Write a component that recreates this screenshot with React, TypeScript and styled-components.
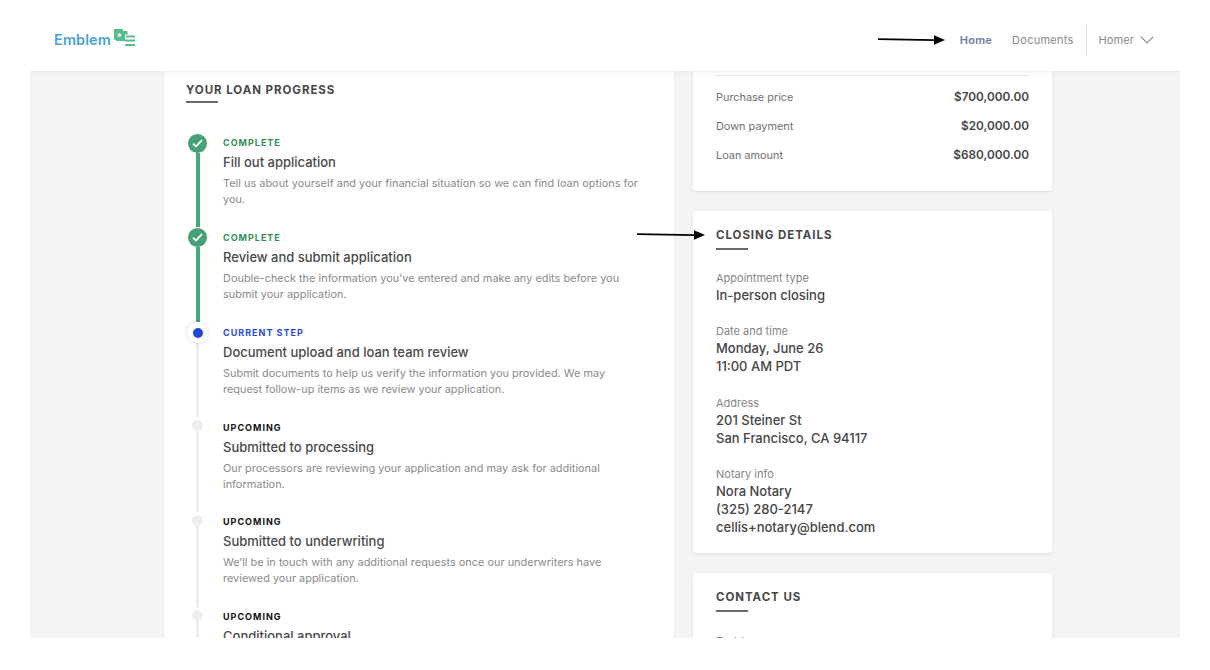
import React from "react";
import styled, { createGlobalStyle } from "styled-components";

const Global = createGlobalStyle`
  html, body { margin: 0; padding: 0; background: #fff; }
  body { font-family: Inter, "Liberation Sans", sans-serif; -webkit-font-smoothing: antialiased; }
  * { box-sizing: border-box; }
`;

const Frame = styled.div`
  position: relative;
  width: 1150px;
  height: 638px;
  margin-left: 30px;
  display: flex;
  flex-direction: column;
  overflow: hidden;
  background: #f4f4f4;
`;
const Header = styled.header`
  position: relative;
  z-index: 2;
  flex: none;
  height: 71px;
  padding: 8px 26px 0 24px;
  display: flex;
  align-items: center;
  justify-content: space-between;
  background: #fff;
  box-shadow: 0 1px 3px rgba(0, 0, 0, 0.06);
`;
const Brand = styled.div`
  display: flex;
  align-items: center;
  gap: 3px;
  margin-top: -4px;
`;
const BrandName = styled.span`
  font-size: 14.5px;
  font-weight: 600;
  letter-spacing: 0.1px;
  color: #4a9fd9;
  margin-top: 4px;
`;
const Nav = styled.nav`
  display: flex;
  align-items: center;
  height: 32px;
`;
const NavLink = styled.a<{ $active?: boolean }>`
  font-size: 11px;
  font-weight: ${(p) => (p.$active ? 600 : 400)};
  letter-spacing: 0.25px;
  color: ${(p) => (p.$active ? "#6f7aa6" : "#8a8a8a")};
  margin-right: 20px;
`;
const UserMenu = styled.div`
  height: 32px;
  margin-left: -8px;
  padding-left: 12px;
  display: flex;
  align-items: center;
  gap: 6px;
  border-left: 1px solid #e6e6e6;
  font-size: 11px;
  letter-spacing: 0.1px;
  color: #8a8a8a;
`;
const Body = styled.main`
  flex: 1;
  min-height: 0;
  padding-left: 134px;
  display: flex;
  align-items: flex-start;
  gap: 19px;
  overflow: hidden;
`;
const ProgressCard = styled.section`
  flex: none;
  width: 510px;
  height: 900px;
  padding: 12px 22px 0;
  background: #fff;
  box-shadow: 0 0 2px rgba(0, 0, 0, 0.1);
`;
const SectionTitle = styled.h2<{ $rule?: number }>`
  margin: 0;
  font-size: 11.5px;
  line-height: 14px;
  font-weight: 700;
  letter-spacing: 0.95px;
  text-transform: uppercase;
  color: #474747;
  &::after {
    content: "";
    display: block;
    width: 32px;
    height: 1.5px;
    margin-top: ${(p) => p.$rule ?? 6}px;
    background: #6a6a6a;
  }
`;
const Steps = styled.ol`
  list-style: none;
  margin: 30px 0 0;
  padding: 0;
`;
const Step = styled.li`
  height: 94.85px;
  display: grid;
  grid-template-columns: 37px 1fr;
`;
const Rail = styled.div`
  display: flex;
  flex-direction: column;
  align-items: center;
  width: 23px;
`;
const Line = styled.span<{ $done?: boolean }>`
  flex: 1;
  width: ${(p) => (p.$done ? "4px" : "3px")};
  background: ${(p) => (p.$done ? "#4aa67a" : "#eeeeee")};
`;
const Node = styled.span<{ $kind: string }>`
  flex: none;
  position: relative;
  z-index: 1;
  display: flex;
  align-items: center;
  justify-content: center;
  border-radius: 50%;
  ${(p) =>
    p.$kind === "done"
      ? "width: 19px; height: 19px; margin-top: 1px; background: #45a276;"
      : p.$kind === "current"
      ? "width: 21px; height: 21px; margin-top: 0; background: #fff; box-shadow: 0 0 4px rgba(0,0,0,0.14);"
      : "width: 11px; height: 11px; margin-top: 3px; background: #eeeeee;"}
`;
const CurrentDot = styled.span`
  width: 10px;
  height: 10px;
  border-radius: 50%;
  background: #2445d6;
`;
const StepText = styled.div`
  min-width: 0;
`;
const StepLabel = styled.div<{ $kind: string }>`
  font-size: 9px;
  line-height: 12px;
  margin-top: 4.5px;
  font-weight: 700;
  letter-spacing: 1px;
  text-transform: uppercase;
  color: ${(p) =>
    p.$kind === "done" ? "#2f8f57" : p.$kind === "current" ? "#2a49dd" : "#111111"};
`;
const StepTitle = styled.h3`
  margin: 4px 0 0;
  font-size: 13px;
  line-height: 18px;
  font-weight: 500;
  color: #4a4a4a;
`;
const StepDesc = styled.p`
  margin: 4px 0 0;
  font-size: 10.9px;
  line-height: 16px;
  letter-spacing: 0.02px;
  color: #8a8a8a;
  max-width: 420px;
`;
const Side = styled.div`
  flex: none;
  width: 359px;
  display: flex;
  flex-direction: column;
  gap: 20px;
  margin-top: -20px;
`;
const Card = styled.section`
  padding: 17px 23px 0 23px;
  background: #fff;
  border-radius: 3px;
  box-shadow: 0 1px 3px rgba(0, 0, 0, 0.1);
`;
const LoanCard = styled(Card)`
  padding-top: 24px;
  padding-bottom: 22px;
  border-radius: 0 0 3px 3px;
`;
const Rows = styled.dl`
  margin: 0;
  padding-top: 6px;
  border-top: 1px solid #e4e4e4;
`;
const Row = styled.div`
  height: 29px;
  display: flex;
  align-items: center;
  justify-content: space-between;
`;
const RowLabel = styled.dt`
  font-size: 10.9px;
  color: #6f6f6f;
`;
const RowValue = styled.dd`
  margin: 0;
  font-size: 11.8px;
  font-weight: 600;
  color: #454545;
`;
const DetailList = styled.div`
  margin-top: 20px;
`;
const Detail = styled.div`
  margin-bottom: 19.5px;
  &:last-child {
    margin-bottom: 17px;
  }
`;
const DetailLabel = styled.div`
  font-size: 11px;
  line-height: 16px;
  color: #858585;
`;
const DetailValue = styled.div`
  font-size: 13px;
  line-height: 18px;
  font-weight: 500;
  color: #454545;
`;
const ContactList = styled.div`
  margin-top: 22px;
  height: 60px;
`;
const ContactHead = styled.div`
  font-size: 12px;
  line-height: 16px;
  color: #858585;
`;
const Arrow = styled.svg<{ $x: number; $y: number }>`
  position: absolute;
  left: ${(p) => p.$x}px;
  top: ${(p) => p.$y}px;
  z-index: 3;
`;

const steps = [
  { kind: "done", label: "Complete", title: "Fill out application", desc: "Tell us about yourself and your financial situation so we can find loan options for you." },
  { kind: "done", label: "Complete", title: "Review and submit application", desc: "Double-check the information you’ve entered and make any edits before you submit your application." },
  { kind: "current", label: "Current step", title: "Document upload and loan team review", desc: "Submit documents to help us verify the information you provided. We may request follow-up items as we review your application." },
  { kind: "up", label: "Upcoming", title: "Submitted to processing", desc: "Our processors are reviewing your application and may ask for additional information." },
  { kind: "up", label: "Upcoming", title: "Submitted to underwriting", desc: "We’ll be in touch with any additional requests once our underwriters have reviewed your application." },
  { kind: "up", label: "Upcoming", title: "Conditional approval", desc: "" },
];

const details = [
  { label: "Appointment type", lines: ["In-person closing"] },
  { label: "Date and time", lines: ["Monday, June 26", "11:00 AM PDT"] },
  { label: "Address", lines: ["201 Steiner St", "San Francisco, CA 94117"] },
  { label: "Notary info", lines: ["Nora Notary", "(325) 280-2147", "cellis+notary@blend.com"] },
];

const ArrowIcon = ({ x, y, w }: { x: number; y: number; w: number }) => (
  <Arrow $x={x} $y={y} width={w} height="12" viewBox={`0 0 ${w} 12`}>
    <path d={`M0 5.2 L${w - 10} 6.2`} stroke="#000" strokeWidth="1.8" fill="none" />
    <path d={`M${w - 11} 1.2 L${w} 6 L${w - 11} 10.8 Z`} fill="#000" />
  </Arrow>
);

export default function App() {
  return (
    <>
      <Global />
      <Frame>
        <Header>
          <Brand>
            <BrandName>Emblem</BrandName>
            <svg width="22" height="18" viewBox="0 0 22 18">
              <path d="M0 0 L9 0 L9 2 L13 2 L14 5 L11 6 L11 12 L3 12 L0 10 Z" fill="#55bd8a" />
              <path d="M5.5 3.4 l.8 1.7 1.8.2-1.3 1.2.4 1.8-1.7-.9-1.6.9.3-1.8-1.3-1.2 1.8-.2z" fill="#e6f5ee" />
              <rect x="12" y="6.5" width="9" height="2" fill="#55bd8a" />
              <rect x="11" y="10.5" width="10" height="2" fill="#55bd8a" />
              <rect x="11" y="15" width="10" height="2" fill="#55bd8a" />
            </svg>
          </Brand>
          <Nav>
            <NavLink $active>Home</NavLink>
            <NavLink>Documents</NavLink>
            <UserMenu>
              Homer
              <svg width="14" height="8" viewBox="0 0 14 8">
                <path d="M.7.7 L7 7 L13.3.7" fill="none" stroke="#8a8a8a" strokeWidth="1.1" />
              </svg>
            </UserMenu>
          </Nav>
        </Header>
        <Body>
          <ProgressCard>
            <SectionTitle $rule={4}>Your loan progress</SectionTitle>
            <Steps>
              {steps.map((s, i) => (
                <Step key={i}>
                  <Rail>
                    <Node $kind={s.kind}>
                      {s.kind === "done" && (
                        <svg width="11" height="9" viewBox="0 0 11 9">
                          <path d="M1 4.6 L4 7.4 L10 1.2" fill="none" stroke="#fff" strokeWidth="1.8" />
                        </svg>
                      )}
                      {s.kind === "current" && <CurrentDot />}
                    </Node>
                    <Line $done={s.kind === "done"} />
                  </Rail>
                  <StepText>
                    <StepLabel $kind={s.kind}>{s.label}</StepLabel>
                    <StepTitle>{s.title}</StepTitle>
                    {s.desc && <StepDesc>{s.desc}</StepDesc>}
                  </StepText>
                </Step>
              ))}
            </Steps>
          </ProgressCard>
          <Side>
            <LoanCard>
              <Rows>
                <Row><RowLabel>Purchase price</RowLabel><RowValue>$700,000.00</RowValue></Row>
                <Row><RowLabel>Down payment</RowLabel><RowValue>$20,000.00</RowValue></Row>
                <Row><RowLabel>Loan amount</RowLabel><RowValue>$680,000.00</RowValue></Row>
              </Rows>
            </LoanCard>
            <Card>
              <SectionTitle>Closing details</SectionTitle>
              <DetailList>
                {details.map((d) => (
                  <Detail key={d.label}>
                    <DetailLabel>{d.label}</DetailLabel>
                    {d.lines.map((l) => (
                      <DetailValue key={l}>{l}</DetailValue>
                    ))}
                  </Detail>
                ))}
              </DetailList>
            </Card>
            <Card>
              <SectionTitle>Contact us</SectionTitle>
              <ContactList>
                <ContactHead>Emblem</ContactHead>
              </ContactList>
            </Card>
          </Side>
        </Body>
        <ArrowIcon x={848} y={34} w={67} />
        <ArrowIcon x={607} y={229} w={68} />
      </Frame>
    </>
  );
}
